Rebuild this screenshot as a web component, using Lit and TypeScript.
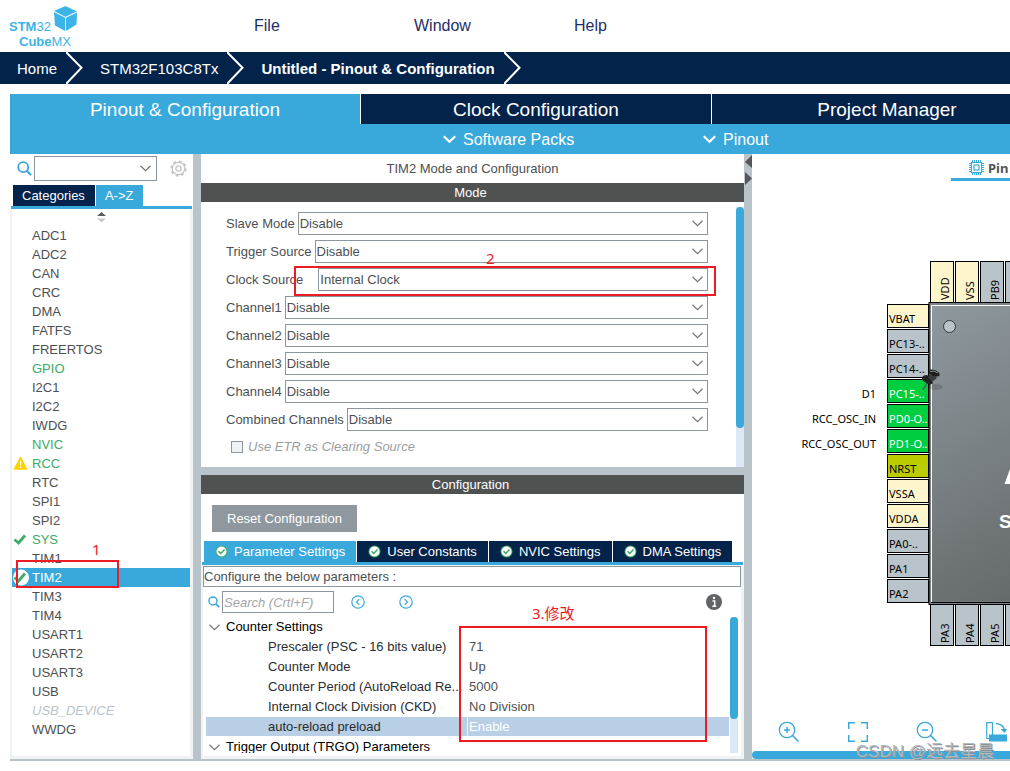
import { LitElement, html, css, svg, nothing } from "lit";
import { customElement, property, state } from "lit/decorators.js";
import { classMap } from "lit/directives/class-map.js";

interface Peripheral {
  name: string;
  tone?: "on" | "off";
  icon?: "warn" | "check";
}

const PERIPHERALS: Peripheral[] = [
  { name: "ADC1" },
  { name: "ADC2" },
  { name: "CAN" },
  { name: "CRC" },
  { name: "DMA" },
  { name: "FATFS" },
  { name: "FREERTOS" },
  { name: "GPIO", tone: "on" },
  { name: "I2C1" },
  { name: "I2C2" },
  { name: "IWDG" },
  { name: "NVIC", tone: "on" },
  { name: "RCC", tone: "on", icon: "warn" },
  { name: "RTC" },
  { name: "SPI1" },
  { name: "SPI2" },
  { name: "SYS", tone: "on", icon: "check" },
  { name: "TIM1" },
  { name: "TIM2", icon: "check" },
  { name: "TIM3" },
  { name: "TIM4" },
  { name: "USART1" },
  { name: "USART2" },
  { name: "USART3" },
  { name: "USB" },
  { name: "USB_DEVICE", tone: "off" },
  { name: "WWDG" },
];

const MODES = [
  { id: "slave", label: "Slave Mode", value: "Disable" },
  { id: "trigger", label: "Trigger Source", value: "Disable" },
  { id: "clock", label: "Clock Source", value: "Internal Clock", wide: true },
  { id: "ch1", label: "Channel1", value: "Disable" },
  { id: "ch2", label: "Channel2", value: "Disable" },
  { id: "ch3", label: "Channel3", value: "Disable" },
  { id: "ch4", label: "Channel4", value: "Disable" },
  { id: "combined", label: "Combined Channels", value: "Disable" },
];

const PARAMS = [
  ["Prescaler (PSC - 16 bits value)", "71"],
  ["Counter Mode", "Up"],
  ["Counter Period (AutoReload Re...", "5000"],
  ["Internal Clock Division (CKD)", "No Division"],
  ["auto-reload preload", "Enable"],
];

const chevron = html`<svg class="chev" width="11" height="7" viewBox="0 0 11 7" aria-hidden="true">
  <path d="M.5 .8 5.5 5.6 10.5 .8" fill="none" stroke="#777" stroke-width="1.2" />
</svg>`;

const magnifier = (size: number) => html`<svg width=${size} height=${size} viewBox="0 0 15 15" aria-hidden="true">
  <circle cx="6.2" cy="6.2" r="5" fill="none" stroke="#39a9dc" stroke-width="1.8" />
  <path d="M9.8 9.8 14 14" stroke="#39a9dc" stroke-width="2.2" />
</svg>`;

/* ---------- Pinout diagram ---------- */

const FILL: Record<string, string> = {
  power: "#fff5cc",
  free: "#b9c4ca",
  used: "#00ce41",
  reset: "#bbcc00",
};

const LEFT_PINS = [
  { name: "VBAT", kind: "power" },
  { name: "PC13-..", kind: "free" },
  { name: "PC14-..", kind: "free" },
  { name: "PC15-..", kind: "used", label: "D1" },
  { name: "PD0-O..", kind: "used", label: "RCC_OSC_IN" },
  { name: "PD1-O..", kind: "used", label: "RCC_OSC_OUT" },
  { name: "NRST", kind: "reset" },
  { name: "VSSA", kind: "power" },
  { name: "VDDA", kind: "power" },
  { name: "PA0-..", kind: "free" },
  { name: "PA1", kind: "free" },
  { name: "PA2", kind: "free" },
];

const TOP_PINS = [
  { name: "VDD", kind: "power" },
  { name: "VSS", kind: "power" },
  { name: "PB9", kind: "free" },
  { name: "", kind: "free" },
];

const BOTTOM_PINS = ["PA3", "PA4", "PA5", ""];

@customElement("pinout-view")
export class PinoutView extends LitElement {
  static styles = css`
    :host {
      display: flex;
      flex-direction: column;
      min-width: 0;
      min-height: 0;
      overflow: hidden;
      background: #fff;
      border-bottom: 2px solid #b9c4ca;
    }
    .tab {
      align-self: flex-end;
      display: flex;
      align-items: center;
      gap: 4px;
      width: 59px;
      height: 27px;
      padding: 3px 0 0 18px;
      box-sizing: border-box;
      border: 0;
      border-bottom: 3px solid #39a9dc;
      background: none;
      font: bold 13px "Noto Sans", sans-serif;
      color: #525456;
      overflow: hidden;
      white-space: nowrap;
    }
    .tab svg {
      flex: none;
    }
    .canvas {
      flex: 1;
      min-height: 0;
      width: 100%;
      display: block;
    }
    .canvas text {
      font: 11px "Noto Sans", sans-serif;
    }
    .canvas .part {
      font: bold 19px "Liberation Sans", sans-serif;
      fill: #fff;
    }
    .tools {
      display: flex;
      gap: 47px;
      padding: 0 26px 8px;
    }
    .tools button {
      flex: none;
      width: 22px;
      height: 22px;
      padding: 0;
      border: 0;
      background: none;
    }
    .tools svg {
      display: block;
    }
    .bar {
      height: 8px;
      background: #39a9dc;
      border-radius: 5px 0 0 5px;
    }
  `;

  render() {
    return html`
      <button class="tab">
        <svg width="15" height="15" viewBox="0 0 15 15" aria-hidden="true">
          <g stroke="#39a9dc" fill="none">
            <path d="M3.5 0V3M5.5 0V3M7.5 0V3M9.5 0V3M11.5 0V3M3.5 12V15M5.5 12V15M7.5 12V15M9.5 12V15M11.5 12V15M0 3.5H3M0 5.5H3M0 7.5H3M0 9.5H3M0 11.5H3M12 3.5H15M12 5.5H15M12 7.5H15M12 9.5H15M12 11.5H15" />
            <rect x="2.5" y="2.5" width="10" height="10" />
            <rect x="5" y="5" width="5" height="5" stroke-width="1.2" />
          </g>
        </svg>
        Pin
      </button>
      <svg class="canvas" role="img" aria-label="Chip pinout">
        <defs>
          <linearGradient id="body" gradientUnits="userSpaceOnUse" x1="0" y1="0" x2="180" y2="280">
            <stop offset="0" stop-color="#8f999f" />
            <stop offset="1" stop-color="#606464" />
          </linearGradient>
        </defs>
        <!-- Diagram space starts at the chip's outer corner -->
        <g transform="translate(176 122)">
          ${LEFT_PINS.map(
            (p, i) => svg`
              <rect x="-40.5" y=${i * 25 + 1.5} width="41" height="23" fill=${FILL[p.kind]} stroke="#000" />
              <text x="-39" y=${i * 25 + 20} fill=${p.kind === "used" ? "#fff" : "#000"}>${p.name}</text>
              ${p.label ? svg`<text x="-52" y=${i * 25 + 20} text-anchor="end">${p.label}</text>` : nothing}`
          )}
          ${TOP_PINS.map(
            (p, i) => svg`
              <rect x=${i * 25 + 2.5} y="-41.5" width="23" height="42" fill=${FILL[p.kind]} stroke="#000" />
              <text transform="translate(${i * 25 + 21} -3) rotate(-90)">${p.name}</text>`
          )}
          ${BOTTOM_PINS.map(
            (p, i) => svg`
              <rect x=${i * 25 + 2.5} y="301.5" width="23" height="41" fill=${FILL.free} stroke="#000" />
              <text transform="translate(${i * 25 + 21} 340) rotate(-90)">${p}</text>`
          )}
          <rect x="1" y="-.5" width="400" height="302" fill="#7b8386" stroke="#000" />
          <rect x="3.5" y="2.5" width="400" height="296" fill="url(#body)" />
          <path d="M3.5 299V2.5H300" fill="none" stroke="#fff" />
          <path d="M3 299.500H300" stroke="#000" />
          <circle cx="21.5" cy="23.5" r="6" fill="#b9c4ca" stroke="#33383c" />
          <path d="M82 166 76.500 181H82Z" fill="#fff" />
          <text class="part" x="71" y="225">S</text>
          <g>
            <ellipse cx="8" cy="84" rx="7" ry="3" fill="#000" opacity=".14" />
            <path d="M-1 80-5 87" stroke="#555" stroke-width="1.500" />
            <path d="M-6 74Q-2 70 2 74L5 80Q2 83 0 81L-6 77Z" fill="#222" />
            <path d="M0 74 5 70 9 75 4 79Z" fill="#3b3b3b" />
            <ellipse cx="6" cy="70" rx="6" ry="3" transform="rotate(22 6 70)" fill="#1d1d1d" />
            <path d="M2 68.500Q6 67 10 70" stroke="#888" fill="none" />
          </g>
        </g>
      </svg>
      <div class="tools">
        <button aria-label="Zoom in">
          <svg width="22" height="22" viewBox="0 0 22 22" fill="none" stroke="#39a9dc">
            <circle cx="9" cy="9" r="7.700" stroke-width="1.300" />
            <path d="M14.500 14.500 20.500 20.500M9 6V12M6 9H12" stroke-width="1.500" />
          </svg>
        </button>
        <button aria-label="Best fit">
          <svg width="22" height="22" viewBox="0 0 22 22" fill="none" stroke="#39a9dc" stroke-width="1.500">
            <path d="M1.700 8V1.700H8M14 1.700H20.300V8M20.300 14V20.300H14M8 20.300H1.700V14" />
          </svg>
        </button>
        <button aria-label="Zoom out">
          <svg width="22" height="22" viewBox="0 0 22 22" fill="none" stroke="#39a9dc">
            <circle cx="9" cy="9" r="7.700" stroke-width="1.300" />
            <path d="M14.500 14.500 20.500 20.500M6 9H12" stroke-width="1.500" />
          </svg>
        </button>
        <button aria-label="Rotate">
          <svg width="22" height="22" viewBox="0 0 22 22">
            <path d="M7.500 17.500H1.700V1.700H7.500V14" fill="none" stroke="#39a9dc" stroke-width="1.200" />
            <rect x="4" y="13.500" width="18" height="7" fill="#39a9dc" />
            <path d="M11 2.500Q18 3 19.500 9" fill="none" stroke="#39a9dc" stroke-width="1.300" />
            <path d="M15.500 8H22L19.500 12Z" fill="#39a9dc" />
          </svg>
        </button>
      </div>
      <div class="bar"></div>
    `;
  }
}

/* ---------- Application shell ---------- */

@customElement("app-root")
export class AppRoot extends LitElement {
  @property() selected = "TIM2";
  @state() private tab = "Parameter Settings";

  static styles = css`
    :host {
      display: flex;
      flex-direction: column;
      position: relative;
      box-sizing: border-box;
      height: 100vh;
      overflow: hidden;
      padding-bottom: 10px;
      background: #fff;
      font: 13px/19px "Liberation Sans", Arial, sans-serif;
      color: #4d4f53;
    }
    *,
    *::before {
      box-sizing: border-box;
    }
    button {
      margin: 0;
      padding: 0;
      border: 0;
      background: none;
      font: inherit;
      color: inherit;
    }

    /* Header */
    .top {
      flex: none;
      display: flex;
      height: 52px;
    }
    .brand {
      width: 254px;
    }
    .brand svg {
      display: block;
    }
    .brand text {
      font: 13px "Liberation Sans", Arial, sans-serif;
      fill: #3cb4e7;
    }
    .brand .heavy {
      font-weight: bold;
    }
    .menu {
      display: flex;
    }
    .menu button {
      width: 160px;
      padding-bottom: 2px;
      text-align: left;
      font-size: 16px;
      color: #1d2f66;
    }
    .crumbs {
      flex: none;
      height: 32px;
      background: #03234b;
      color: #fff;
    }
    .crumbs ol {
      display: flex;
      margin: 0;
      padding: 0;
      list-style: none;
    }
    .crumbs li {
      display: flex;
      align-items: center;
      gap: 9px;
      padding-left: 17px;
      font-size: 15px;
    }
    .crumbs a {
      color: inherit;
      text-decoration: none;
    }
    .crumbs .here {
      font-weight: bold;
    }

    /* Main tabs */
    .tabs {
      flex: none;
      display: grid;
      grid-template-columns: repeat(3, 35%);
      gap: 1px;
      margin: 10px 0 0 10px;
      overflow: hidden;
    }
    .tabs button {
      height: 30px;
      background: #03234b;
      color: #fff;
      font-size: 19px;
      white-space: nowrap;
    }
    .tabs .active {
      background: #39a9dc;
    }
    .sub {
      flex: none;
      display: flex;
      height: 30px;
      margin-left: 10px;
      padding-left: 433px;
      background: #39a9dc;
      color: #fff;
    }
    .sub button {
      display: flex;
      align-items: center;
      gap: 7px;
      width: 260px;
      font-size: 16px;
    }

    /* Three panes */
    .work {
      flex: 1;
      min-height: 0;
      display: grid;
      grid-template-columns: 183px 8px minmax(0, 543fr) 8px minmax(0, 258fr);
      grid-template-rows: minmax(0, 1fr);
      margin-left: 10px;
    }
    .split {
      display: flex;
      flex-direction: column;
      align-items: center;
      gap: 4px;
      padding-top: 1px;
      background: #b9c4ca;
    }
    .split button,
    .split svg {
      display: block;
    }

    /* Peripheral list */
    .side {
      display: flex;
      flex-direction: column;
      min-height: 0;
      border-bottom: 2px solid #b9c4ca;
    }
    .find {
      display: flex;
      align-items: center;
      gap: 2px;
      padding: 2px 6px 0 7px;
    }
    .find .gear {
      margin-left: auto;
    }
    .find .gear svg {
      display: block;
    }
    .combo {
      display: grid;
      align-items: center;
    }
    .combo > * {
      grid-area: 1 / 1;
    }
    .combo select {
      width: 100%;
      height: 23px;
      padding: 0 1px;
      border: 1px solid #8d969c;
      border-radius: 0;
      appearance: none;
      background: #fff;
      font: inherit;
      color: inherit;
    }
    .combo .chev {
      justify-self: end;
      margin-right: 5px;
      pointer-events: none;
    }
    .find .combo {
      width: 123px;
    }
    .find select {
      height: 25px;
    }
    .find .chev {
      margin-right: 6px;
    }
    .sort {
      display: flex;
      gap: 1px;
      margin: 4px 1px 0;
      padding-left: 2px;
      border-bottom: 3px solid #39a9dc;
    }
    .sort button {
      height: 21px;
      padding: 0 10px 0 9px;
      background: #03234b;
      color: #fff;
    }
    .sort .active {
      background: #39a9dc;
    }
    .list {
      flex: 1;
      min-height: 0;
      overflow: hidden;
      border: solid #f0f2f3;
      border-width: 0 3px 3px 2px;
    }
    .list .arrows {
      display: block;
      height: 17px;
      margin: 0 auto;
    }
    .list ul {
      margin: 0;
      padding: 0;
      list-style: none;
    }
    .list button {
      display: grid;
      grid-template-columns: 20px 1fr;
      align-items: center;
      width: 100%;
      height: 19px;
      text-align: left;
    }
    .list .on {
      color: #3cab63;
    }
    .list .off {
      color: #b9c4ca;
      font-style: italic;
    }
    .list .picked {
      background: #39a9dc;
      color: #fff;
    }
    .list svg {
      display: block;
    }

    /* Middle pane */
    .mid {
      display: flex;
      flex-direction: column;
      min-width: 0;
      min-height: 0;
      border-bottom: 2px solid #b9c4ca;
    }
    .title {
      flex: none;
      margin: 0;
      font: inherit;
      line-height: 29px;
      text-align: center;
    }
    .band {
      flex: none;
      margin: 0;
      padding-right: 4px;
      font: inherit;
      line-height: 19px;
      text-align: center;
      background: #4f5251;
      color: #fff;
    }
    .modes {
      flex: none;
      display: flex;
      height: 273px;
      border-bottom: 8px solid #b9c4ca;
    }
    .rows {
      flex: 1;
      display: flex;
      flex-direction: column;
      gap: 5px;
      padding: 10px 28px 0 25px;
    }
    .row {
      display: flex;
      align-items: center;
      gap: 3px;
    }
    .row .combo {
      flex: 1;
    }
    .row .wide {
      padding-right: 12px;
    }
    .etr {
      display: flex;
      align-items: center;
      gap: 5px;
      padding: 1px 0 0 5px;
      color: #9b9da0;
      font-style: italic;
    }
    .etr input {
      width: 12px;
      height: 12px;
      margin: 0;
      appearance: none;
      border: 1px solid #8d969c;
      background: #f0f2f3;
    }
    .track {
      flex: none;
      width: 8px;
      background: #dbe8f5;
    }
    .thumb {
      width: 8px;
      background: #39a9dc;
      border-radius: 4px;
    }
    .modes .track {
      margin-top: 5px;
    }
    .modes .thumb {
      height: 221px;
    }

    /* Configuration */
    .config {
      flex: 1;
      min-height: 0;
      display: flex;
      flex-direction: column;
    }
    .reset {
      flex: none;
      align-self: flex-start;
      height: 27px;
      margin: 11px 0 9px 11px;
      padding: 0 15px;
      background: #8f989e;
      color: #fff;
    }
    .ctabs {
      flex: none;
      display: flex;
      gap: 1px;
      margin: 0 1px;
      padding-left: 2px;
      border-bottom: 3px solid #39a9dc;
    }
    .ctabs button {
      display: flex;
      align-items: center;
      gap: 6px;
      height: 21px;
      padding: 0 11px;
      background: #03234b;
      color: #fff;
      white-space: nowrap;
    }
    .ctabs .active {
      background: #39a9dc;
    }
    .sheet {
      flex: 1;
      min-height: 0;
      display: flex;
      flex-direction: column;
      border: solid #f0f2f3;
      border-width: 1px 3px 3px 2px;
    }
    .note {
      flex: none;
      margin: 0;
      border: 1px solid #8d969c;
      line-height: 19px;
    }
    .seek {
      flex: none;
      display: flex;
      align-items: center;
      gap: 2px;
      padding: 4px 19px 3px 5px;
    }
    .seek svg {
      display: block;
    }
    .seek input {
      width: 112px;
      height: 22px;
      padding: 0 1px;
      border: 1px solid #8d969c;
      font: inherit;
      color: inherit;
    }
    .seek input::placeholder {
      color: #a4a6a9;
      font-style: italic;
    }
    .seek .prev {
      margin-left: 15px;
    }
    .seek .next {
      margin-left: 32px;
    }
    .seek .info {
      margin-left: auto;
    }
    .tree {
      flex: 1;
      min-height: 0;
      display: flex;
      gap: 1px;
      padding: 0 3px 3px;
    }
    .grid {
      flex: 1;
      min-width: 0;
      overflow: hidden;
    }
    table {
      width: 100%;
      table-layout: fixed;
      border-spacing: 0 1px;
    }
    .key {
      width: 261px;
    }
    th,
    td {
      height: 19px;
      padding: 0;
      text-align: left;
      font-weight: normal;
      line-height: 19px;
      white-space: nowrap;
    }
    th {
      color: #000;
    }
    th svg {
      margin: 0 6px 0 3px;
    }
    td:first-child {
      padding-left: 62px;
      color: #2b2c2e;
    }
    td:last-child {
      padding-left: 2px;
    }
    .current td {
      background: #b8cfe5;
    }
    .current td:last-child {
      border-left: 1px solid #eef4fa;
      padding-left: 1px;
      color: #fff;
    }
    .tree .thumb {
      height: 102px;
    }
    .tree .track {
      margin-top: 1px;
    }

    /* Red call-outs laid over the window */
    .mark {
      position: absolute;
      border: 2px solid #ed1c24;
      pointer-events: none;
    }
    .m1 {
      left: 16px;
      top: 560px;
      width: 103px;
      height: 28px;
    }
    .m2 {
      left: 294px;
      top: 266px;
      width: 422px;
      height: 30px;
    }
    .m3 {
      left: 459px;
      top: 626px;
      width: 248px;
      height: 116px;
    }
    .step {
      position: absolute;
      font: 15px/20px "Noto Sans", "Noto Sans CJK SC", sans-serif;
      color: #ed1c24;
    }
    .s1 {
      left: 92px;
      top: 539px;
    }
    .s2 {
      left: 486px;
      top: 248px;
    }
    .s3 {
      left: 532px;
      top: 603px;
    }
    .sign {
      position: absolute;
      right: 16px;
      bottom: 8px;
      font: 17px/22px "Liberation Sans", "Noto Sans CJK SC", sans-serif;
      color: #b4b9bd;
      text-shadow: 1px 1px 0 #8b9196;
      white-space: nowrap;
    }
  `;

  private statusIcon(p: Peripheral) {
    if (p.icon === "warn")
      return html`<svg width="18" height="15" viewBox="0 0 18 15">
        <path d="M8.500 1.500 14.500 13H2.500Z" fill="#ffd200" stroke="#ffd200" stroke-width="1.500" stroke-linejoin="round" />
        <path d="M8.500 5V9.500M8.500 10.500V12" stroke="#fff" stroke-width="1.200" />
      </svg>`;
    if (p.icon === "check") {
      const picked = p.name === this.selected;
      return html`<svg width="18" height="17" viewBox="0 0 18 17">
        ${picked ? svg`<circle cx="9" cy="8.500" r="8" fill="#fff" />` : nothing}
        <path d="M2.500 8.500 6.500 12 13 4.500" fill="none" stroke="#3cab63" stroke-width="2.800" />
      </svg>`;
    }
    return html`<span></span>`;
  }

  private arrow() {
    return html`<svg width="17" height="32" viewBox="0 0 17 32" aria-hidden="true">
      <path d="M0 0 15.500 15.700 0 32" fill="none" stroke="#fff" stroke-width="2" />
    </svg>`;
  }

  private dropMark() {
    return html`<svg width="13" height="9" viewBox="0 0 13 9" aria-hidden="true">
      <path d="M.8 1.200 6.500 6.800 12.200 1.200" fill="none" stroke="#fff" stroke-width="2.200" />
    </svg>`;
  }

  render() {
    return html`
      <header class="top">
        <div class="brand">
          <svg width="90" height="52" viewBox="0 0 90 52" role="img" aria-label="STM32 CubeMX">
            <path d="M54 11 65.500 6 77 11.500 65.500 17Z" fill="#3cb4e7" />
            <path d="M54 12 65 17.600V31L55 25.500Z" fill="#3cb4e7" />
            <path d="M77 12.500 66 17.800V31L76.500 24.500Z" fill="#3cb4e7" />
            <path d="M54.500 11.800 65.500 17.300 76.500 12M65.500 17.300V30.500" stroke="#d5effa" stroke-width=".8" fill="none" />
            <text x="9" y="31"><tspan class="heavy">STM</tspan>32</text>
            <text x="19" y="46"><tspan class="heavy">Cube</tspan>MX</text>
          </svg>
        </div>
        <nav class="menu">
          <button>File</button>
          <button>Window</button>
          <button>Help</button>
        </nav>
      </header>

      <nav class="crumbs">
        <ol>
          <li><a href="#home">Home</a>${this.arrow()}</li>
          <li><a href="#device">STM32F103C8Tx</a>${this.arrow()}</li>
          <li class="here"><a href="#config">Untitled - Pinout &amp; Configuration</a>${this.arrow()}</li>
        </ol>
      </nav>

      <nav class="tabs">
        <button class="active">Pinout &amp; Configuration</button>
        <button>Clock Configuration</button>
        <button>Project Manager</button>
      </nav>
      <div class="sub">
        <button>${this.dropMark()}Software Packs</button>
        <button>${this.dropMark()}Pinout</button>
      </div>

      <main class="work">
        <aside class="side">
          <div class="find">
            ${magnifier(15)}
            <span class="combo">
              <select aria-label="Search peripherals"><option></option></select>
              ${chevron}
            </span>
            <button class="gear" aria-label="Settings">
              <svg width="17" height="17" viewBox="0 0 17 17" fill="none" stroke="#c3c5c7">
                <circle cx="8.500" cy="8.500" r="6.200" stroke-width="1.200" />
                <circle cx="8.500" cy="8.500" r="7.200" stroke-width="1.800" stroke-dasharray="2.900 2.755" />
                <circle cx="8.500" cy="8.500" r="2.600" stroke-width="1.300" />
              </svg>
            </button>
          </div>
          <div class="sort">
            <button>Categories</button>
            <button class="active">A-&gt;Z</button>
          </div>
          <div class="list">
            <svg class="arrows" width="9" height="17" viewBox="0 0 9 17" aria-hidden="true">
              <path d="M0 7 4.500 3 9 7Z" fill="#5b5d60" />
              <path d="M0 9.500H9L4.500 13.500Z" fill="#c6c8ca" />
            </svg>
            <ul>
              ${PERIPHERALS.map(
                (p) => html`<li>
                  <button
                    class=${classMap({
                      on: p.tone === "on",
                      off: p.tone === "off",
                      picked: p.name === this.selected,
                    })}
                    @click=${() => (this.selected = p.name)}
                  >
                    ${this.statusIcon(p)}${p.name}
                  </button>
                </li>`
              )}
            </ul>
          </div>
        </aside>

        <div class="split"></div>

        <section class="mid">
          <h1 class="title">TIM2 Mode and Configuration</h1>
          <h2 class="band">Mode</h2>
          <div class="modes">
            <div class="rows">
              ${MODES.map(
                (m) => html`<div class="row">
                  <label for=${m.id} class=${m.wide ? "wide" : ""}>${m.label}</label>
                  <span class="combo">
                    <select id=${m.id}><option>${m.value}</option></select>
                    ${chevron}
                  </span>
                </div>`
              )}
              <label class="etr"><input type="checkbox" disabled />Use ETR as Clearing Source</label>
            </div>
            <div class="track"><div class="thumb"></div></div>
          </div>

          <h2 class="band">Configuration</h2>
          <div class="config">
            <button class="reset">Reset Configuration</button>
            <nav class="ctabs">
              ${["Parameter Settings", "User Constants", "NVIC Settings", "DMA Settings"].map(
                (t) => html`<button class=${classMap({ active: t === this.tab })} @click=${() => (this.tab = t)}>
                  <svg width="13" height="13" viewBox="0 0 13 13" aria-hidden="true">
                    <circle cx="6.500" cy="6.500" r="6" fill="#3cab63" />
                    <circle cx="6.500" cy="6.500" r="5" fill="#fff" />
                    <path d="M3.500 6.300 5.800 8.400 9.500 4.500" fill="none" stroke="#3cab63" stroke-width="1.500" />
                  </svg>
                  ${t}
                </button>`
              )}
            </nav>
            <div class="sheet">
              <p class="note">Configure the below parameters :</p>
              <div class="seek">
                ${magnifier(12)}
                <input aria-label="Search parameters" placeholder="Search (Crtl+F)" />
                <button class="prev" aria-label="Previous">
                  <svg width="14" height="14" viewBox="0 0 14 14" fill="none" stroke="#39a9dc" stroke-width="1.200">
                    <circle cx="7" cy="7" r="6.200" />
                    <path d="M8.300 4.200 5.500 7 8.300 9.800" />
                  </svg>
                </button>
                <button class="next" aria-label="Next">
                  <svg width="14" height="14" viewBox="0 0 14 14" fill="none" stroke="#39a9dc" stroke-width="1.200">
                    <circle cx="7" cy="7" r="6.200" />
                    <path d="M5.700 4.200 8.500 7 5.700 9.800" />
                  </svg>
                </button>
                <button class="info" aria-label="Information">
                  <svg width="16" height="16" viewBox="0 0 16 16">
                    <circle cx="8" cy="8" r="8" fill="#636466" />
                    <path d="M6.500 7H8.700V12M6.300 12.200H10.200" fill="none" stroke="#fff" stroke-width="1.500" />
                    <circle cx="8" cy="4" r="1.200" fill="#fff" />
                  </svg>
                </button>
              </div>
              <div class="tree">
                <div class="grid">
                  <table>
                    <colgroup>
                      <col class="key" />
                      <col />
                    </colgroup>
                    <tbody>
                      <tr>
                        <th colspan="2">${chevron}Counter Settings</th>
                      </tr>
                      ${PARAMS.map(
                        ([name, value], i) => html`<tr class=${i === PARAMS.length - 1 ? "current" : ""}>
                          <td>${name}</td>
                          <td>${value}</td>
                        </tr>`
                      )}
                      <tr>
                        <th colspan="2">${chevron}Trigger Output (TRGO) Parameters</th>
                      </tr>
                    </tbody>
                  </table>
                </div>
                <div class="track"><div class="thumb"></div></div>
              </div>
            </div>
          </div>
        </section>

        <div class="split">
          <button aria-label="Collapse left">
            <svg width="8" height="13" viewBox="0 0 8 13"><path d="M8 0V13L1 7Z" fill="#55575a" /></svg>
          </button>
          <button aria-label="Collapse right">
            <svg width="8" height="13" viewBox="0 0 8 13"><path d="M1 0V13L8 6.500Z" fill="#55575a" /></svg>
          </button>
        </div>

        <pinout-view></pinout-view>
      </main>

      <div class="mark m1"></div>
      <div class="mark m2"></div>
      <div class="mark m3"></div>
      <span class="step s1">1</span>
      <span class="step s2">2</span>
      <span class="step s3">3.修改</span>
      <span class="sign">CSDN @远去星晨</span>
    `;
  }
}
